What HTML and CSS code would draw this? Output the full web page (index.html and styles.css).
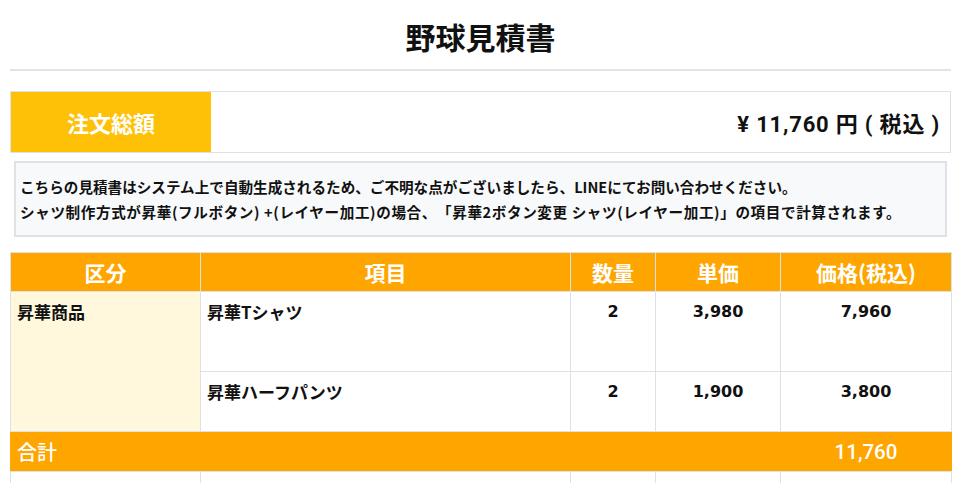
FILE: index.html
```html
<!DOCTYPE html>
<html lang="ja">
<head>
<meta charset="utf-8">
<title>野球見積書</title>
<link rel="stylesheet" href="styles.css">
</head>
<body>
<div class="page">
  <h1 class="title">野球見積書</h1>
  <div class="divider"></div>
  <div class="total-box">
    <div class="total-label">注文総額</div>
    <div class="total-value">¥ 11,760 円 ( 税込 )</div>
  </div>
  <div class="note">
    <p>こちらの見積書はシステム上で自動生成されるため、ご不明な点がございましたら、LINEにてお問い合わせください。</p>
    <p class="wide">シャツ制作方式が昇華(フルボタン) +(レイヤー加工)の場合、「昇華2ボタン変更 シャツ(レイヤー加工)」の項目で計算されます。</p>
  </div>
  <table class="estimate">
    <colgroup>
      <col class="c1"><col class="c2"><col class="c3"><col class="c4"><col class="c5">
    </colgroup>
    <thead>
      <tr class="head">
        <th>区分</th><th>項目</th><th>数量</th><th>単価</th><th>価格(税込)</th>
      </tr>
    </thead>
    <tbody>
      <tr class="row-a">
        <td class="cat" rowspan="2">昇華商品</td>
        <td class="item">昇華Tシャツ</td>
        <td class="num">2</td>
        <td class="num">3,980</td>
        <td class="num">7,960</td>
      </tr>
      <tr class="row-b">
        <td class="item">昇華ハーフパンツ</td>
        <td class="num">2</td>
        <td class="num">1,900</td>
        <td class="num">3,800</td>
      </tr>
      <tr class="sum">
        <td class="sum-label" colspan="4">合計</td>
        <td class="sum-value">11,760</td>
      </tr>
      <tr class="row-empty">
        <td></td><td></td><td></td><td></td><td></td>
      </tr>
    </tbody>
  </table>
</div>
</body>
</html>
```
FILE: styles.css
```css
html, body {
  margin: 0;
  padding: 0;
  background: #ffffff;
}
body {
  font-family: "Noto Sans CJK JP", "Noto Sans", sans-serif;
  color: #111;
  text-spacing-trim: space-all;
}
.page {
  padding: 0 10px;
}
.title {
  margin: 0;
  padding-top: 15px;
  height: 42px;
  line-height: 42px;
  font-size: 30px;
  font-weight: 700;
  text-align: center;
  color: #111;
}
.divider {
  margin-top: 12px;
  height: 2px;
  background: #e1e5e9;
}
.total-box {
  margin-top: 20px;
  display: flex;
  border: 1px solid #dee2e6;
  height: 60px;
}
.total-label {
  width: 200px;
  background: #ffc107;
  color: #fff;
  font-size: 22px;
  font-weight: 700;
  display: flex;
  align-items: center;
  justify-content: center;
}
.total-value {
  flex: 1;
  display: flex;
  align-items: center;
  justify-content: flex-end;
  padding-right: 10px;
  font-family: Roboto, "Noto Sans CJK JP", sans-serif;
  font-size: 22px;
  font-weight: 700;
  letter-spacing: 0.8px;
  color: #111;
}
.note {
  margin: 8px 4px 0;
  border: 2px solid #dee2e6;
  background: #f8f9fa;
  padding: 11px 4px;
}
.note p {
  margin: 0;
  font-size: 14.6px;
  line-height: 25px;
  font-weight: 700;
  color: #111;
  white-space: nowrap;
}
.note .wide {
  letter-spacing: 0.6px;
}
.estimate {
  margin-top: 15px;
  width: 941px;
  border-collapse: collapse;
  table-layout: fixed;
}
.c1 { width: 190px; }
.c2 { width: 370px; }
.c3 { width: 85px; }
.c4 { width: 125px; }
.c5 { width: 171px; }
.estimate th, .estimate td {
  border: 1px solid #dee2e6;
  padding: 0;
}
.head th {
  height: 38px;
  background: #ffa500;
  color: #fff;
  font-size: 21px;
  font-weight: 700;
  text-align: center;
  vertical-align: middle;
  line-height: 30px;
}
.row-a td, .row-b td {
  vertical-align: top;
  padding: 8px 6px 0;
  font-size: 17px;
  line-height: 24px;
  font-weight: 700;
  color: #111;
}
.row-a td { height: 71px; }
.row-b td { height: 51px; }
.cat {
  background: #fff8dc;
}
.row-a .num, .row-b .num {
  text-align: center;
  font-family: "DejaVu Sans", "Noto Sans CJK JP", sans-serif;
  font-size: 16px;
}
.sum td {
  height: 39px;
  background: #ffa500;
  color: #fff;
  vertical-align: middle;
  border-left-color: #ffa500;
  border-right-color: #ffa500;
}
.sum-label {
  padding-left: 6px !important;
  font-size: 20px;
  font-weight: 500;
}
.sum-value {
  text-align: center;
  font-family: Roboto, sans-serif;
  font-size: 20.5px;
  font-weight: 500;
}
.row-empty td {
  height: 30px;
}
```
